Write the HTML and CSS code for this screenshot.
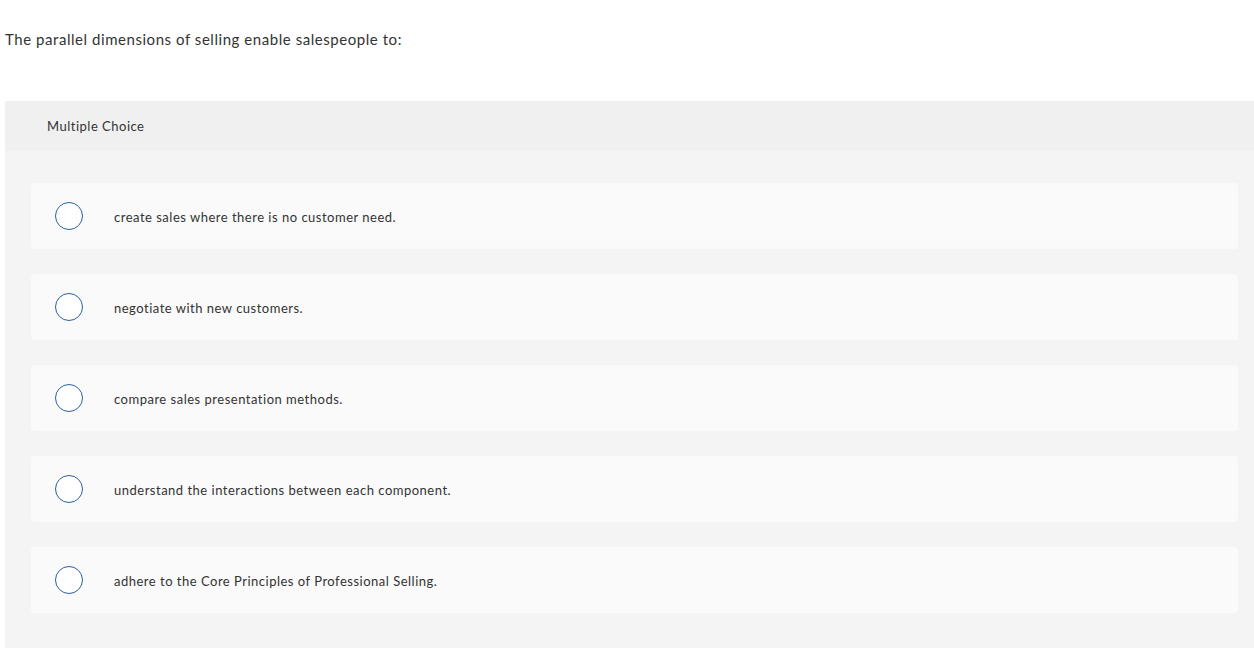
FILE: index.html
```html
<!DOCTYPE html>
<html lang="en">
<head>
    <meta charset="UTF-8">
    <title>Multiple Choice</title>
    <link rel="stylesheet" href="styles.css">
</head>
<body>
    <div class="question">
        <p class="prompt">The parallel dimensions of selling enable salespeople to:</p>

        <div class="choice-panel">
            <div class="panel-header">Multiple Choice</div>

            <div class="panel-body">
                <label class="choice">
                    <span class="radio"></span>
                    <span class="choice-text">create sales where there is no customer need.</span>
                </label>
                <label class="choice">
                    <span class="radio"></span>
                    <span class="choice-text">negotiate with new customers.</span>
                </label>
                <label class="choice">
                    <span class="radio"></span>
                    <span class="choice-text">compare sales presentation methods.</span>
                </label>
                <label class="choice">
                    <span class="radio"></span>
                    <span class="choice-text">understand the interactions between each component.</span>
                </label>
                <label class="choice">
                    <span class="radio"></span>
                    <span class="choice-text">adhere to the Core Principles of Professional Selling.</span>
                </label>
            </div>
        </div>
    </div>
</body>
</html>
```

FILE: styles.css
```css
* {
    margin: 0;
    padding: 0;
    box-sizing: border-box;
}

body {
    font-family: 'Lato', 'Liberation Sans', sans-serif;
    color: #333333;
    background: #ffffff;
    overflow: hidden;
    letter-spacing: 0.5px;
}

.question {
    padding-left: 5px;
}

.prompt {
    font-size: 15px;
    line-height: 20px;
    padding-top: 29px;
    height: 101px;
    letter-spacing: 0.55px;
}

.choice-panel {
    background: #f4f4f4;
    min-height: 560px;
}

.panel-header {
    background: #f0f0f0;
    height: 50px;
    display: flex;
    align-items: center;
    padding-left: 42px;
    font-size: 13px;
}

.panel-body {
    display: flex;
    flex-direction: column;
    gap: 25px;
    padding: 32px 16px 32px 26px;
}

.choice {
    display: flex;
    align-items: center;
    height: 66px;
    background: #fafafa;
    border-radius: 4px;
    padding-left: 24px;
    cursor: pointer;
}

.radio {
    width: 28px;
    height: 28px;
    border: 1.5px solid #2b5f9e;
    border-radius: 50%;
    background: #ffffff;
    flex-shrink: 0;
}

.choice-text {
    margin-left: 31px;
    padding-top: 2px;
    font-size: 13px;
}
```
